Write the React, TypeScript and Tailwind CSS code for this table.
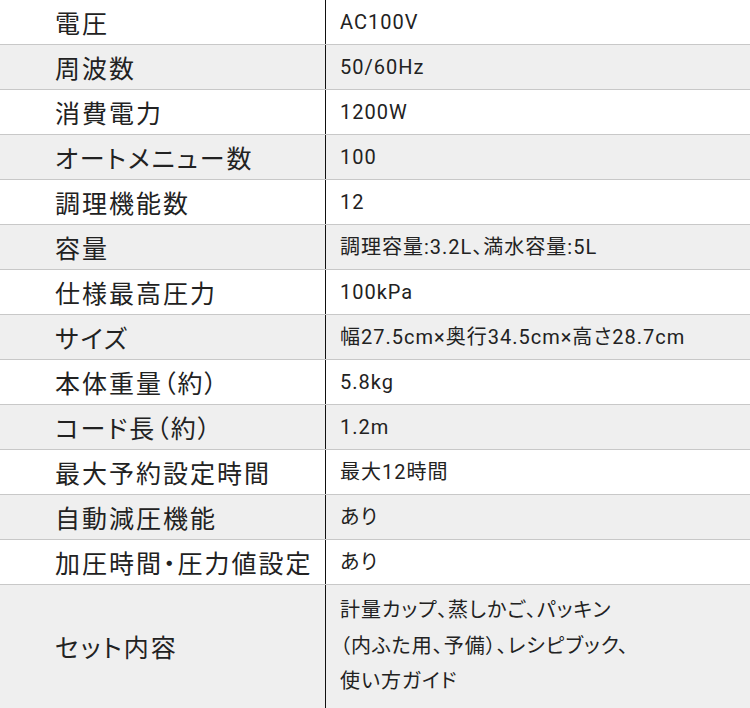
const ROWS: { label: string; value: string[] }[] = [
  { label: '電圧', value: ['AC100V'] },
  { label: '周波数', value: ['50/60Hz'] },
  { label: '消費電力', value: ['1200W'] },
  { label: 'オートメニュー数', value: ['100'] },
  { label: '調理機能数', value: ['12'] },
  { label: '容量', value: ['調理容量:3.2L、満水容量:5L'] },
  { label: '仕様最高圧力', value: ['100kPa'] },
  { label: 'サイズ', value: ['幅27.5cm×奥行34.5cm×高さ28.7cm'] },
  { label: '本体重量（約）', value: ['5.8kg'] },
  { label: 'コード長（約）', value: ['1.2m'] },
  { label: '最大予約設定時間', value: ['最大12時間'] },
  { label: '自動減圧機能', value: ['あり'] },
  { label: '加圧時間・圧力値設定', value: ['あり'] },
  {
    label: 'セット内容',
    value: ['計量カップ、蒸しかご、パッキン', '（内ふた用、予備）、レシピブック、', '使い方ガイド'],
  },
];

export default function App() {
  return (
    <div className="w-[750px] h-[708px] bg-white text-[#222] font-['Roboto','Noto_Sans_CJK_JP',sans-serif] overflow-hidden">
      {ROWS.map((row, i) => {
        const last = i === ROWS.length - 1;
        return (
          <div
            key={row.label}
            className={`flex ${last ? 'h-[123px]' : 'h-[45px] border-b border-[#c8c8c8]'} ${
              i % 2 === 1 ? 'bg-[#efefef]' : 'bg-white'
            }`}
          >
            <div className="w-[326px] shrink-0 flex items-center pl-[55px] border-r border-[#111] text-[25px] tracking-[2px] [font-feature-settings:'palt'] font-['Noto_Sans_CJK_JP',sans-serif] leading-none whitespace-nowrap">
              {row.label}
            </div>
            <div className="flex-1 flex flex-col justify-center pl-[14px] text-[20px] tracking-[1px] [font-feature-settings:'palt']">
              {row.value.map((line) => (
                <div key={line} className={last ? 'leading-[35.5px]' : 'leading-none'}>
                  {line}
                </div>
              ))}
            </div>
          </div>
        );
      })}
    </div>
  );
}
